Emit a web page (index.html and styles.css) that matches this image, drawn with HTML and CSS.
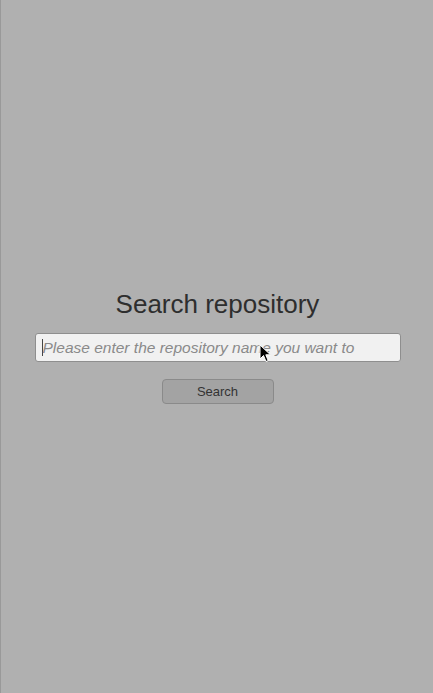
FILE: index.html
```html
<!DOCTYPE html>
<html>
<head>
<meta charset="utf-8">
<link rel="stylesheet" href="styles.css">
</head>
<body>
<main class="page">
  <section class="search">
    <h1 class="title">Search repository</h1>
    <div class="field">
      <span class="caret"></span>
      <span class="placeholder">Please enter the repository name you want to</span>
    </div>
    <button class="btn">Search</button>
  </section>
  <svg class="pointer" width="14" height="20" viewBox="0 0 14 20">
    <path d="M1 1 L1 15 L4.5 11.5 L7 17.5 L9.2 16.6 L6.8 10.8 L11.5 10.8 Z" fill="#000" stroke="#fff" stroke-width="1"/>
  </svg>
</main>
</body>
</html>
```
FILE: styles.css
```css
html, body {
  margin: 0;
  padding: 0;
  background: #b0b0b0;
}
.page {
  position: relative;
  height: 693px;
  box-sizing: border-box;
  padding-left: 2px;
  box-shadow: inset 1px 0 0 #999;
  font-family: "Liberation Sans", Arial, sans-serif;
  display: flex;
  flex-direction: column;
  align-items: center;
}
.search {
  margin-top: 288px;
  display: flex;
  flex-direction: column;
  align-items: center;
  width: 366px;
}
.title {
  margin: 0;
  font-size: 26px;
  font-weight: normal;
  color: #2e2e2e;
  line-height: 32px;
}
.field {
  margin-top: 13px;
  width: 366px;
  height: 29px;
  box-sizing: border-box;
  background: #f1f1f1;
  border: 1px solid #8e8e8e;
  border-radius: 3px;
  display: flex;
  align-items: center;
  padding-left: 6px;
  overflow: hidden;
  white-space: nowrap;
}
.caret {
  width: 1px;
  height: 17px;
  background: #444;
}
.placeholder {
  font-style: italic;
  font-size: 15.5px;
  color: #8a8a8a;
}
.btn {
  margin-top: 17px;
  width: 112px;
  height: 25px;
  background: #a3a3a3;
  border: 1px solid #8a8a8a;
  border-radius: 4px;
  font-family: "Liberation Sans", Arial, sans-serif;
  font-size: 13px;
  color: #333;
  padding: 0;
}
.pointer {
  position: absolute;
  left: 259px;
  top: 344px;
}
```
